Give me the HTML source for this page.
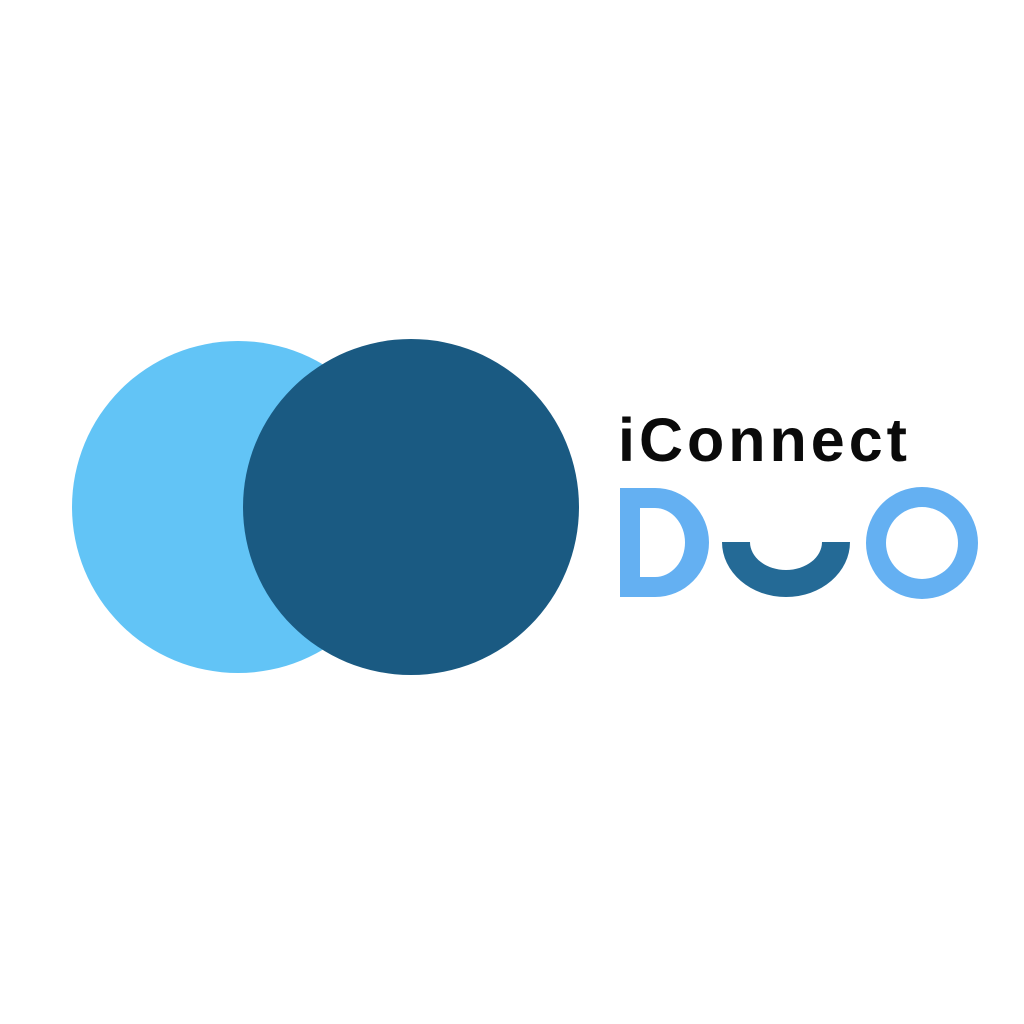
<!DOCTYPE html>
<html><head><meta charset="utf-8"><style>
html,body{margin:0;padding:0;background:#fff;width:1024px;height:1024px;overflow:hidden}
.t{position:absolute;left:618px;top:400px;font:bold 61px "Liberation Sans",sans-serif;color:#0a0a0a;letter-spacing:4px;line-height:80px}
</style></head><body>
<svg width="1024" height="1024" style="position:absolute;left:0;top:0">
<circle cx="238" cy="507" r="166" fill="#62c4f6"/>
<circle cx="411" cy="507" r="168" fill="#1a5a82"/>
<path fill="#64b0f2" fill-rule="evenodd" d="M620 488 H655 A54 54.5 0 0 1 655 597 H620 Z M640 508 V577 H655 A30 34.5 0 0 0 655 508 Z"/>
<path fill="#246a96" d="M722 542 H750 A36 28 0 0 0 822 542 H850 A64 55 0 0 1 722 542 Z"/>
<path fill="#64b0f2" fill-rule="evenodd" d="M866 543 A56 56 0 1 0 978 543 A56 56 0 1 0 866 543 Z M886 543 A36 36 0 1 1 958 543 A36 36 0 1 1 886 543 Z"/>
</svg>
<div class="t">iConnect</div>
</body></html>
